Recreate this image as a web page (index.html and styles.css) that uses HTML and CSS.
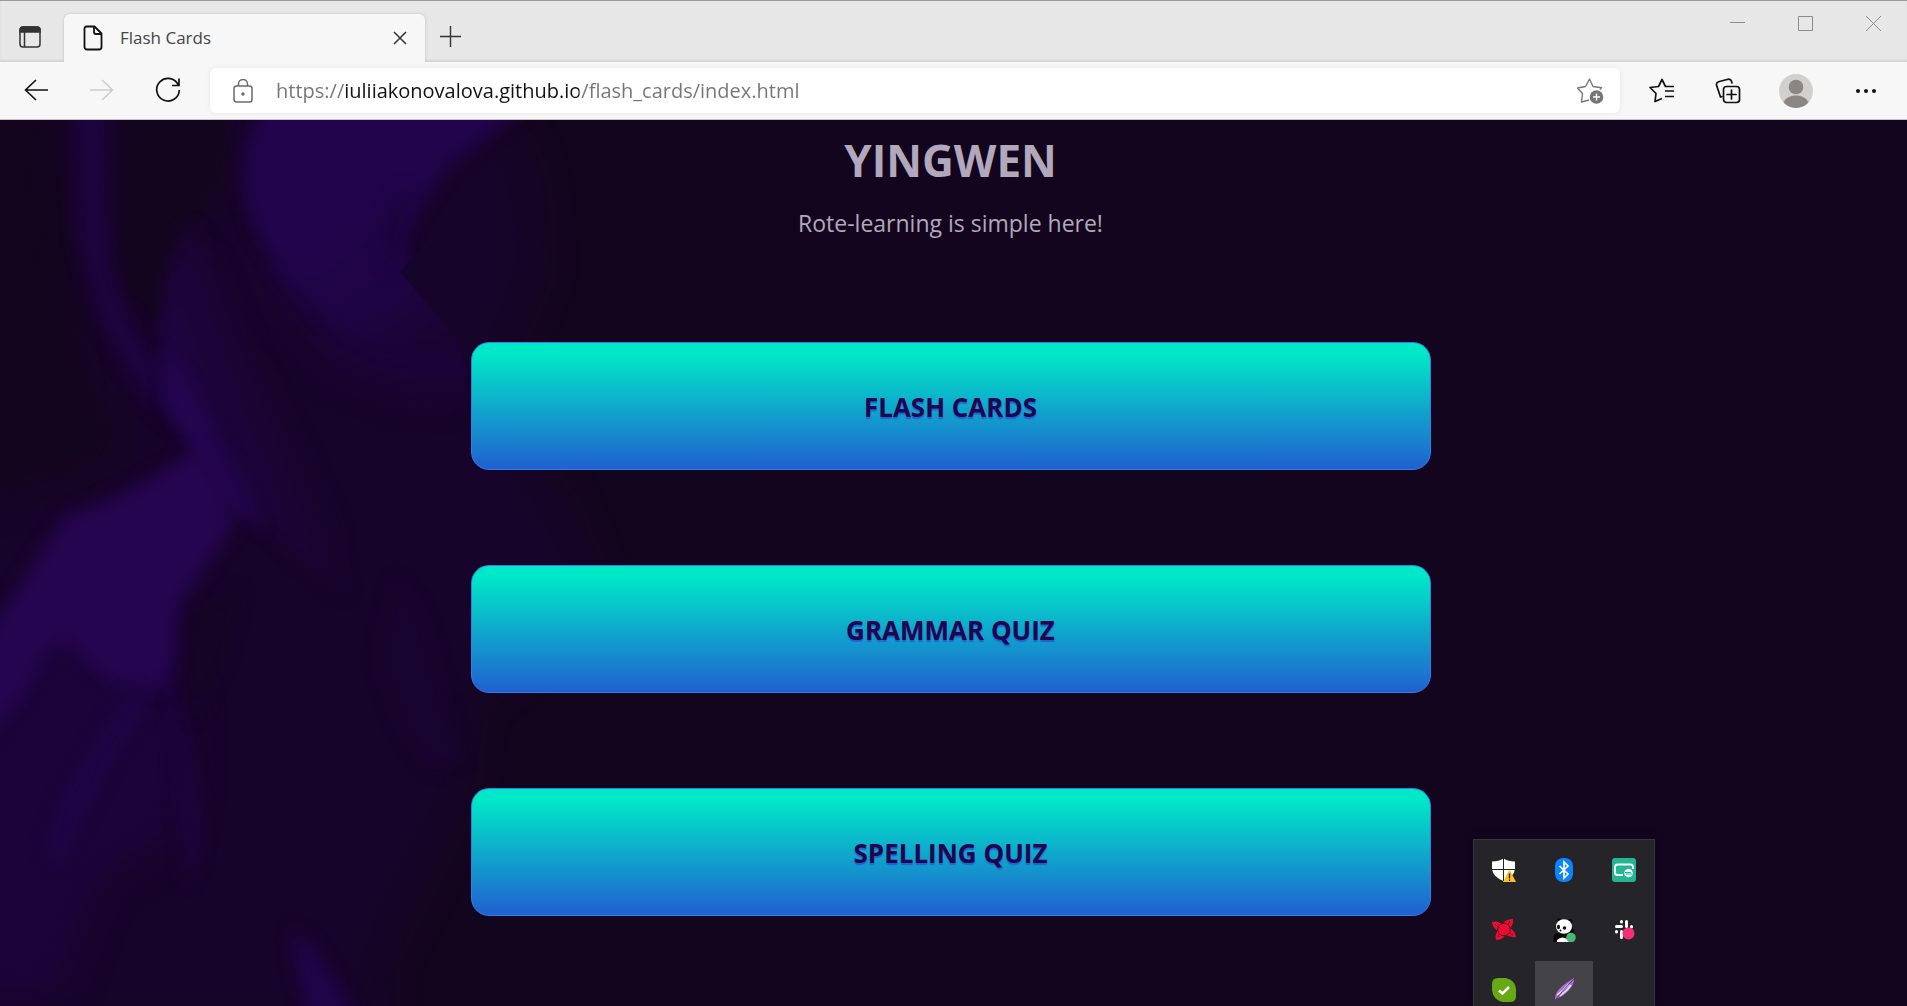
FILE: index.html
```html
<!DOCTYPE html>
<html lang="en">
<head>
<meta charset="utf-8">
<meta name="viewport" content="width=device-width, initial-scale=1">
<title>Flash Cards</title>
<link rel="stylesheet" href="styles.css">
</head>
<body>
<div class="browser">
  <header class="tabs">
    <button class="icon-btn workspace" aria-label="Tab actions">
      <svg width="22" height="22" viewBox="0 0 22 22" fill="none" stroke="#333" stroke-width="1.5"><rect x="1" y="1" width="20" height="20" rx="3"/><path d="M1 6V4a3 3 0 0 1 3-3h14a3 3 0 0 1 3 3v2z" fill="#333"/><path d="M5.5 6v15"/></svg>
    </button>
    <div class="tab">
      <svg class="tab-file" width="20" height="26" viewBox="0 0 20 26" fill="none" stroke="#111" stroke-width="1.8" stroke-linejoin="round"><path d="M3.500 1.500h8l7 7v13.500a2.500 2.500 0 0 1-2.500 2.500h-12a2.500 2.500 0 0 1-2.500-2.500v-18.500a2 2 0 0 1 2-2zM11 1.500v5.500a2 2 0 0 0 2 2h5.500"/></svg>
      <span class="tab-title">Flash Cards</span>
      <button class="icon-btn tab-close" aria-label="Close tab"><svg width="14" height="14" viewBox="0 0 14 14" stroke="#333" stroke-width="1.5"><path d="M1 1l12 12M13 1L1 13"/></svg></button>
    </div>
    <button class="icon-btn new-tab" aria-label="New tab"><svg width="21" height="21" viewBox="0 0 21 21" stroke="#333" stroke-width="1.4"><path d="M10.500 0v21M0 10.500h21"/></svg></button>
    <div class="window-controls">
      <button class="icon-btn" aria-label="Minimize"><svg width="15" height="15" viewBox="0 0 15 15" stroke="#8c8c8c"><path d="M0 6.500h15"/></svg></button>
      <button class="icon-btn" aria-label="Maximize"><svg width="15" height="15" viewBox="0 0 15 15" fill="none" stroke="#8c8c8c"><path d="M.5.5h14v14H.5z"/></svg></button>
      <button class="icon-btn" aria-label="Close"><svg width="15" height="15" viewBox="0 0 15 15" stroke="#8c8c8c"><path d="M0 0l15 15M15 0L0 15"/></svg></button>
    </div>
  </header>

  <div class="toolbar">
    <button class="icon-btn" aria-label="Back"><svg width="24" height="22" viewBox="0 0 24 22" fill="none" stroke="#111" stroke-width="1.6"><path d="M24 11H1.500M12 1L1.500 11 12 21"/></svg></button>
    <button class="icon-btn" aria-label="Forward"><svg width="24" height="22" viewBox="0 0 24 22" fill="none" stroke="#ccc" stroke-width="1.6"><path d="M0 11h22.500M12 1l10.500 10L12 21"/></svg></button>
    <button class="icon-btn" aria-label="Refresh"><svg width="26" height="26" viewBox="0 0 26 26" fill="none" stroke="#111" stroke-width="1.7"><path d="M23.500 8.500A11.300 11.300 0 1 0 24.300 13M24 1.500v7h-7"/></svg></button>
    <div class="address">
      <svg width="20" height="24" viewBox="0 0 20 24" fill="none" stroke="#6b6b6b" stroke-width="1.5"><rect x="1" y="7" width="18" height="16" rx="2.500"/><path d="M5.500 7V5a4.500 4.500 0 0 1 9 0v2"/><circle cx="10" cy="15" r="1" fill="#6b6b6b"/></svg>
      <input class="url" type="text" aria-label="Address" value="https://iuliiakonovalova.github.io/flash_cards/index.html">
      <button class="icon-btn" aria-label="Add to favorites"><svg width="27" height="26" viewBox="0 0 27 26" fill="none" stroke="#767676" stroke-width="1.4" stroke-linejoin="round"><path d="M12 22l-7.500 2 1-8.500-5-5.500 8-1.500L12.500 1 16 8.500l8.500 1.200-1.500 2"/><circle cx="19.500" cy="19" r="6.800" fill="#767676" stroke="none"/><path d="M19.500 15.500v7M16 19h7" stroke="#fff"/></svg></button>
    </div>
    <div class="actions">
      <button class="icon-btn" aria-label="Favorites"><svg width="26" height="25" viewBox="0 0 26 25" fill="none" stroke="#111" stroke-width="1.700" stroke-linejoin="round"><path d="M13 20.500L6 23.500l1-8-6-6 8.500-1L13 1.500 16.500 8.500H25M16 13h9M16 18.500h9"/></svg></button>
      <button class="icon-btn" aria-label="Collections"><svg width="26" height="26" viewBox="0 0 26 26" fill="none" stroke="#111" stroke-width="1.700" stroke-linecap="round"><path d="M7 18.500L5.500 19 1.500 7a3 3 0 0 1 2-3.300L13 1.300a3 3 0 0 1 3.500 2L17 5"/><rect x="8.500" y="8.500" width="16" height="16" rx="3"/><path d="M16.500 12v9M12 16.500h9"/></svg></button>
      <button class="icon-btn" aria-label="Profile"><svg width="34" height="34" viewBox="0 0 34 34"><circle cx="17" cy="17" r="17" fill="#d2d0cd"/><circle cx="17" cy="13" r="7.300" fill="#8a8683"/><path d="M4.500 28.500C7 23.500 11.500 21.500 17 21.500s10 2 12.500 7A17 17 0 0 1 4.500 28.500z" fill="#8a8683"/></svg></button>
      <button class="icon-btn" aria-label="Settings and more"><svg width="20" height="4" viewBox="0 0 20 4" fill="#111"><circle cx="2" cy="2" r="2"/><circle cx="10" cy="2" r="2"/><circle cx="18" cy="2" r="2"/></svg></button>
    </div>
  </div>

  <main class="page">
    <svg class="smoke" viewBox="0 120 1907 886" preserveAspectRatio="xMinYMin slice" aria-hidden="true" color-interpolation-filters="sRGB">
      <defs>
        <filter id="soft" x="-30%" y="-30%" width="160%" height="160%"><feGaussianBlur stdDeviation="8"/></filter>
        <filter id="softer" x="-40%" y="-40%" width="180%" height="180%"><feGaussianBlur stdDeviation="18"/></filter>
        <linearGradient id="fall" gradientUnits="userSpaceOnUse" x1="290" y1="230" x2="400" y2="390"><stop offset="0" stop-color="#22044d"/><stop offset=".55" stop-color="#1f0444"/><stop offset="1" stop-color="#17042b"/></linearGradient>
        <linearGradient id="ribbon" gradientUnits="userSpaceOnUse" x1="175" y1="440" x2="300" y2="395"><stop offset="0" stop-color="#25054f"/><stop offset=".35" stop-color="#1d043c"/><stop offset="1" stop-color="#160429"/></linearGradient>
        <clipPath id="edge"><path d="M0 100H600L530 150 440 225 400 272 461 343Q470 390 466 450L450 520 440 1006H0z"/></clipPath>
      </defs>
      <path filter="url(#softer)" fill="#17042a" d="M60 100L480 80 530 170 540 270 480 400 560 500 600 600 470 700 460 800 380 960 380 1030H-40V500L90 440z"/>
      <path filter="url(#softer)" fill="#14051e" d="M-40 80H35L50 240 80 380 130 430 90 480-40 500z"/>
      <path filter="url(#soft)" fill="#14051f" d="M120 100H235L225 190 180 240 160 330 120 290 112 200z"/>
      <path filter="url(#soft)" fill="#1d043f" d="M74 100H106L108 215 110 270 132 325 160 370 176 425 140 390 100 320 78 240z"/>
      <g clip-path="url(#edge)">
        <path filter="url(#softer)" fill="#1c043a" d="M245 250L400 270 480 340 485 390 410 390 330 360z"/>
        <path filter="url(#soft)" fill="url(#fall)" d="M268 90L550 90 500 128 450 165 415 215 405 250 420 275 475 335 450 350 385 350 330 322 285 280 255 230 243 190 245 150z"/>
        <path filter="url(#soft)" fill="#1b043c" d="M400 190L378 235 384 262 396 270 400 240 412 195z"/>
      </g>
      <path filter="url(#soft)" fill="url(#ribbon)" d="M190 225L225 270 255 350 300 440 335 520 345 595 290 550 238 500 200 450 168 400 160 340 168 270z"/>
      <path filter="url(#soft)" fill="#240550" d="M162 350L185 378 210 430 240 480 262 530 225 505 192 450 168 410z"/>
      <path filter="url(#softer)" fill="#1b0439" d="M-30 620L175 650 188 740 180 830 100 880 60 990-30 1000z"/>
      <path filter="url(#soft)" fill="#25054f" d="M198 448L226 492 234 525 212 558 182 600 177 650 168 690 115 686 84 660 65 642 45 654 26 692-15 745V640L10 598 46 545 62 518 96 504 140 484z"/>
      <path filter="url(#soft)" fill="#1f0446" d="M132 690L100 735 62 800 46 850 60 870 80 820 110 760 150 700z"/>
      <path filter="url(#soft)" fill="#1c043d" d="M165 680L176 745 182 830 188 885 205 840 190 760 175 700z"/>
      <path filter="url(#soft)" fill="#150424" d="M190 620L240 590 225 650 195 720 186 680z"/>
      <path filter="url(#soft)" fill="#180430" d="M395 580L420 610 445 700 460 760 432 770 400 725 378 660z"/>
      <path filter="url(#soft)" fill="#20044a" d="M292 930L312 945 335 980 362 1030H316L300 990z"/>
    </svg>
    <div class="content">
      <h1 class="title">YINGWEN</h1>
      <p class="lead">Rote-learning is simple here!</p>
      <nav class="menu">
        <button class="card">FLASH CARDS</button>
        <button class="card">GRAMMAR QUIZ</button>
        <button class="card">SPELLING QUIZ</button>
      </nav>
    </div>
  </main>

  <aside class="tray" aria-label="Hidden tray icons">
    <button class="tray-btn" aria-label="Windows Security"><svg width="24" height="24" viewBox="0 0 24 24"><path d="M0 3.500Q7 3.500 11.500.5 16 3.500 23 3.500V11Q22 19 11.500 23 1 19 0 11z" fill="#fff"/><path d="M11.500 0v24M0 11.500h23" stroke="#222"/><path d="M17.500 11.500L24 24H11z" fill="#fcc21b"/><path d="M17.500 15.500v5M17.500 21.500v1.500" stroke="#222" stroke-width="1.300"/></svg></button>
    <button class="tray-btn" aria-label="Bluetooth"><svg width="18" height="24" viewBox="0 0 18 24"><rect width="18" height="24" rx="8" fill="#0a84ff"/><path d="M4.500 8l8.500 8-4 4V4l4 4-8.500 8" fill="none" stroke="#fff" stroke-width="1.700"/></svg></button>
    <button class="tray-btn" aria-label="Screen share"><svg width="24" height="24" viewBox="0 0 24 24"><rect width="24" height="24" rx="3" fill="#27b491"/><path d="M11 17H5.500A2.500 2.500 0 0 1 3 14.500V9a2.500 2.500 0 0 1 2.500-2.500h13A2.500 2.500 0 0 1 21 9v2" fill="none" stroke="#f4fffb" stroke-width="2"/><circle cx="16.500" cy="15" r="4.300" fill="#e9fff8"/><path d="M13 14.500h6M14 16h6" stroke="#27b491"/></svg></button>
    <button class="tray-btn" aria-label="Antivirus"><svg width="24" height="22" viewBox="0 0 24 22"><g fill="#ed0b31"><path d="M0 3Q5 1 12 6L6 12Q0 8 0 3z"/><path d="M10 5Q14 0 21 0 22 5 17 11z"/><path d="M18 9Q23 12 24 18 18 19 12 15z"/><path d="M14 15Q11 21 4 21 2 16 7 10z"/></g><path d="M3 5l4 4M18 2l-2 4M21 16l-4-2M6 18l2-4" stroke="#52101f"/><circle cx="12" cy="10.500" r="6.300" fill="#ed0b31" stroke="#52101f"/></svg></button>
    <button class="tray-btn" aria-label="Panda"><svg width="24" height="24" viewBox="0 0 24 24"><path d="M2 16L8 14 20 9 23 16 20 24H1z" fill="#080808"/><circle cx="7" cy="3" r="2.500" fill="#080808"/><circle cx="18" cy="3.500" r="2.500" fill="#080808"/><ellipse cx="12" cy="8.500" rx="8" ry="7.300" fill="#fff"/><ellipse cx="6.500" cy="9" rx="1.500" ry="2.200" fill="#111"/><ellipse cx="12.500" cy="10" rx="1.800" ry="1.800" fill="#111"/><circle cx="8.500" cy="12.500" r="1" fill="#111"/><path d="M5 22q5-5 12 0v2H5z" fill="#fff"/><circle cx="19" cy="19.500" r="4.800" fill="#45b871"/></svg></button>
    <button class="tray-btn" aria-label="Slack"><svg width="24" height="24" viewBox="0 0 24 24" fill="none" stroke="#fff" stroke-width="3" stroke-linecap="round"><path d="M9.500 3.500v.5M9.500 8.500H4.500M14.500 3.500v5M19.500 8.500v.5M4.500 13.500v.5M9.500 13.500v6"/><circle cx="16.500" cy="15.500" r="6" fill="#f62e73" stroke="none"/></svg></button>
    <button class="tray-btn" aria-label="Protection status"><svg width="24" height="24" viewBox="0 0 24 24"><path d="M6 0h8q9 2 10 11v7q0 6-6 6h-7Q1 22 0 12V6q0-6 6-6z" fill="#67a914"/><path d="M7 12.500l3.500 3L17 9" fill="none" stroke="#fff" stroke-width="2.500"/></svg></button>
    <button class="tray-btn tray-btn-active" aria-label="Feather"><svg width="24" height="24" viewBox="0 0 24 24"><path d="M3 21C3 12 12 6 22 0 23 8 14 17 4 21z" fill="#a674cf"/><path d="M5 17Q11 13 17 6M8 18Q15 13 19 7" fill="none" stroke="#efe2fa" stroke-width="1.500"/><path d="M2 24Q9 14 22 1" fill="none" stroke="#6d2fa0"/></svg></button>
  </aside>
</div>
</body>
</html>
```
FILE: styles.css
```css
* { box-sizing: border-box; }

body {
  margin: 0;
  font-family: "Open Sans", "Noto Sans", sans-serif;
  background: #14051f;
}

.browser {
  position: relative;
  display: flex;
  flex-direction: column;
  min-height: 100vh;
  overflow: hidden;
}

.icon-btn {
  display: flex;
  align-items: center;
  justify-content: center;
  padding: 0;
  border: 0;
  background: none;
}

/* Tab strip */
.tabs {
  display: flex;
  height: 62px;
  border-top: 1px solid #999;
  background: #e7e7e7;
  box-shadow: inset 0 -2px 2px #d3d3d3;
}

.workspace { width: 60px; margin: 11px 4px 0 0; }

.tab {
  display: flex;
  align-items: center;
  width: 361px;
  margin-top: 13px;
  padding: 0 13px 0 19px;
  border-radius: 6px 6px 0 0;
  background: #f7f7f7;
  box-shadow: 0 0 3px #bbb;
  clip-path: inset(-4px -4px 0 -4px);
}

.tab-title {
  flex: 1;
  margin-left: 17px;
  padding-bottom: 2px;
  font-size: 17px;
  color: #444;
}

.tab-close { width: 24px; height: 24px; }

.new-tab { width: 50px; margin-top: 10px; }

.window-controls { display: flex; margin-left: auto; }
.window-controls .icon-btn { width: 68px; height: 44px; }

/* Toolbar */
.toolbar {
  display: flex;
  align-items: center;
  height: 58px;
  padding: 0 6px 0 3px;
  border-bottom: 1px solid #c4c4c4;
  background: #f7f7f7;
}

.toolbar .icon-btn { width: 66px; height: 44px; }

.toolbar > .icon-btn { padding: 0 1px 2px 0; }

.address {
  display: flex;
  flex: 1;
  align-items: center;
  height: 45px;
  margin: 0 9px;
  padding-left: 23px;
  border-radius: 6px;
  background: #fff;
  box-shadow: 0 0 5px #e4e4e4;
}

.url {
  flex: 1;
  min-width: 0;
  margin-left: 23px;
  padding: 0;
  border: 0;
  outline: 0;
  font-family: inherit;
  font-size: 20px;
  line-height: 28px;
  color: transparent;
  background: linear-gradient(to right, #757575 68px, #111 68px, #111 303px, #757575 303px);
  background-clip: text;
  -webkit-background-clip: text;
}

.address .icon-btn { width: 60px; }

.actions { display: flex; }
.actions .icon-btn:nth-child(n+3) { width: 70px; }

/* Page */
.page {
  position: relative;
  flex: 1;
  background: #14051f;
}

.smoke {
  position: absolute;
  inset: 0;
  width: 100%;
  height: 100%;
}

.content {
  position: relative;
  display: flex;
  flex-direction: column;
  align-items: center;
  padding: 10px 6px 89px 0;
}

.title {
  margin: 0;
  font-size: 44px;
  line-height: 60px;
  color: #b2a8bc;
}

.lead {
  margin: 15px 0 101px;
  font-size: 23px;
  line-height: 36px;
  color: #b2a8bc;
}

.menu {
  display: grid;
  gap: 95px;
  width: min(960px, 90%);
}

.card {
  height: 128px;
  padding: 2px 0 0;
  border: 1px solid #2f7fe8;
  border-radius: 18px;
  background: linear-gradient(#00e8c8 8%, #2060d0 100%);
  font-family: inherit;
  font-size: 26px;
  font-weight: 700;
  color: #22054f;
  text-shadow: 0 2px 1px #1c64d1;
}

/* Notification tray flyout */
.tray {
  position: absolute;
  right: 252px;
  bottom: 0;
  display: grid;
  grid-template-columns: repeat(3, 58px);
  grid-auto-rows: 58px;
  gap: 2px;
  height: 167px;
  padding: 1px;
  overflow: hidden;
  border: 1px solid #3b3540;
  border-bottom: 0;
  background: #252429;
  box-shadow: 0 0 8px #0c0314;
}

.tray-btn {
  display: flex;
  align-items: center;
  justify-content: center;
  padding: 0;
  border: 0;
  background: none;
}

.tray-btn-active { background: #444348; }
```
